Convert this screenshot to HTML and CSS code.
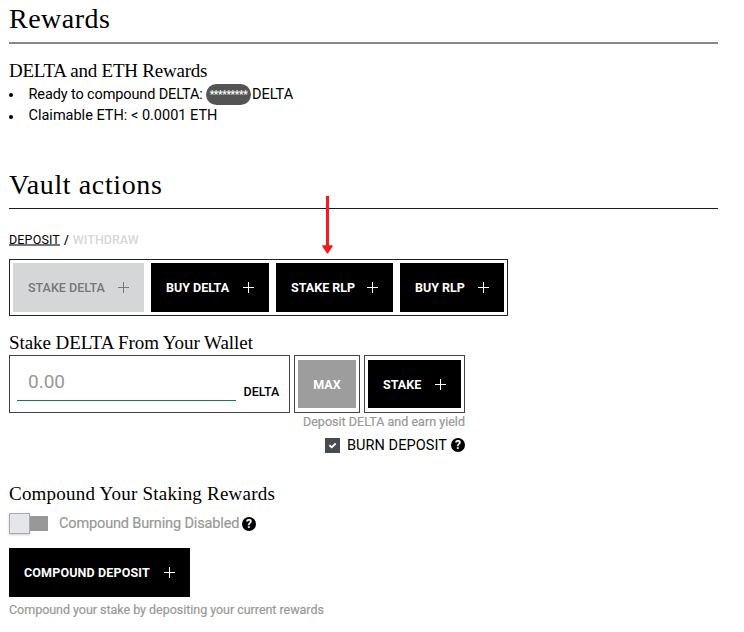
FILE: index.html
```
<!DOCTYPE html>
<html lang="en">
<head>
<meta charset="utf-8">
<title>Rewards and vault actions</title>
<link rel="stylesheet" href="styles.css">
</head>
<body>
<main class="page">
  <section>
    <h2 class="title title-rewards">Rewards</h2>
    <h3 class="subtitle sub-rewards">DELTA and ETH Rewards</h3>
    <ul class="list">
      <li class="row-ready"><span class="ready">Ready to compound DELTA:</span><span class="pill">*********</span><span class="unit">DELTA</span></li>
      <li>Claimable ETH: &lt; 0.0001 ETH</li>
    </ul>
  </section>

  <section class="vault">
    <h2 class="title title-vault">Vault actions
      <svg class="arrow" width="12" height="59" viewBox="0 0 12 59"><path d="M5.5 0V51" stroke="#ff1616" stroke-width="3"/><path d="M1 50H10L5.5 56.8Z" fill="#ff1616" stroke="#ff1616" stroke-width="1.5" stroke-linejoin="round"/></svg>
    </h2>
    <nav class="tabs"><a class="tab-active">DEPOSIT</a><span>/</span><a class="tab">WITHDRAW</a></nav>
    <div class="frame actions">
      <button class="btn btn-disabled w-stake-delta">STAKE DELTA<i class="plus"></i></button>
      <button class="btn w-buy-delta">BUY DELTA<i class="plus"></i></button>
      <button class="btn w-stake-rlp">STAKE RLP<i class="plus"></i></button>
      <button class="btn w-buy-rlp">BUY RLP<i class="plus"></i></button>
    </div>

    <h3 class="subtitle sub-stake">Stake DELTA From Your Wallet</h3>
    <div class="stake-form">
      <div class="frame amount"><div class="field">0.00</div><span class="amount-unit">DELTA</span></div>
      <div class="frame"><button class="btn btn-max">MAX</button></div>
      <div class="frame"><button class="btn btn-stake">STAKE<i class="plus"></i></button></div>
    </div>
    <div class="stake-notes">
      <p class="note">Deposit DELTA and earn yield</p>
      <div class="burn">
        <span class="check"><svg width="15" height="15" viewBox="0 0 15 15"><path d="M4.4 7.3L6.7 9.3L10.7 5.5" fill="none" stroke="#fff" stroke-width="1.8"/></svg></span>
        <span class="burn-label">BURN DEPOSIT</span>
        <span class="help">?</span>
      </div>
    </div>

    <h3 class="subtitle sub-compound">Compound Your Staking Rewards</h3>
    <div class="toggle-row">
      <span class="knob"></span><span class="track"></span>
      <span class="toggle-label">Compound Burning Disabled</span>
      <span class="help">?</span>
    </div>
    <button class="btn btn-compound">COMPOUND DEPOSIT<i class="plus"></i></button>
    <p class="note note-compound">Compound your stake by depositing your current rewards</p>
  </section>
</main>
</body>
</html>
```
FILE: styles.css
```
* { box-sizing: border-box; margin: 0; padding: 0; }
body { background: #fff; color: #000; font: 14.5px Roboto, sans-serif; }
.page { width: 718px; padding-left: 9px; }

.title { height: 43px; border-bottom: 1px solid #1c1c1c; font: 400 28px/37px "Liberation Serif", serif; position: relative; }
.title-rewards { height: 44px; border-bottom: 2px solid #888; letter-spacing: .5px; }
.title-vault { letter-spacing: .62px; }
.arrow { position: absolute; left: 313px; top: 30px; }
.vault { margin-top: 40px; }

.subtitle { height: 24px; font: 400 19px/24px "Liberation Serif", serif; white-space: nowrap; }
.sub-rewards { margin-top: 15px; letter-spacing: -.23px; }
.sub-stake { margin-top: 15px; letter-spacing: -.06px; }
.sub-compound { margin-top: 26px; letter-spacing: .22px; }

.list { list-style: none; }
.list li { display: flex; align-items: center; height: 21px; }
.list li::before { content: ""; width: 4px; height: 4px; margin: 2px 15.5px 0 0; border-radius: 50%; background: #000; }
.list .row-ready { height: 22px; }
.ready { width: 177.5px; letter-spacing: -.12px; }
.pill { width: 45px; height: 21px; margin-right: 1px; border-radius: 10.5px; background: #545454; color: #fff; font: 700 10px/22px Roboto, sans-serif; text-align: center; letter-spacing: -.35px; }

.tabs { display: flex; margin-top: 21px; height: 20px; line-height: 20px; font-size: 12.5px; font-weight: 500; }
.tabs span { margin: 0 4px; }
.tab-active { font-weight: 400; height: 16px; border-bottom: 2px solid #777; letter-spacing: .15px; }
.tab { color: #d8d8d8; letter-spacing: .02px; }

.frame { border: 1px solid #222; padding: 3px; }
.actions { display: flex; gap: 7px; width: 499px; height: 57px; margin-top: 9px; }
.btn { display: flex; align-items: center; justify-content: space-between; height: 49px; padding: 0 15px; border: 0; background: #000; color: #fff; font: 700 12.5px Roboto, sans-serif; white-space: nowrap; }
.btn-disabled { background: #d5d6d8; color: #777; font-weight: 500; }
.w-stake-delta { width: 131px; }
.w-buy-delta { width: 118px; }
.w-stake-rlp { width: 117px; }
.w-buy-rlp { width: 104px; }
.plus { width: 11px; height: 11px; background: linear-gradient(currentColor, currentColor) center / 11px 1px no-repeat, linear-gradient(currentColor, currentColor) center / 1px 11px no-repeat; }

.stake-form { display: flex; gap: 4px; }
.stake-form .frame { height: 58px; padding: 4px 3px; border-color: #444; }
.stake-form .amount { display: flex; width: 281px; padding: 0 7px; }
.stake-form .btn { height: 48px; }
.field { width: 219px; height: 45px; padding-left: 11px; border-bottom: 1px solid #16795c; color: #999; font-size: 19px; line-height: 51px; }
.amount-unit { margin: 27px 0 0 7.5px; font-size: 12.5px; line-height: 18px; font-weight: 500; }
.stake-form .btn-max { width: 58px; background: #9d9d9d; justify-content: center; }
.btn-stake { width: 93px; }

.stake-notes { width: 456px; }
.note { height: 18px; color: #999; font-size: 12.5px; line-height: 18px; letter-spacing: .02px; -webkit-text-stroke: .2px #999; text-align: right; }
.burn { display: flex; align-items: center; justify-content: flex-end; height: 22px; margin-top: 3px; }
.check { width: 15px; height: 15px; margin-right: 7px; background: #484b50; }
.check svg { display: block; }
.burn-label { width: 104px; letter-spacing: .06px; }
.help { width: 14px; height: 14px; border-radius: 50%; background: #000; color: #fff; font: 700 12px/14px Roboto, sans-serif; text-align: center; }

.toggle-row { display: flex; align-items: center; height: 21px; margin-top: 7px; }
.knob { width: 21px; height: 21px; border: 1px solid #aaa; background: #e5e6ea; box-shadow: 0 1px 2px #0003; }
.track { width: 18px; height: 15px; background: #989898; }
.toggle-label { width: 183px; margin-left: 11px; color: #999; letter-spacing: -.14px; white-space: nowrap; -webkit-text-stroke: .2px #999; }
.btn-compound { width: 181px; margin-top: 14px; letter-spacing: .15px; }
.note-compound { margin-top: 4px; text-align: left; letter-spacing: -.03px; }
```
